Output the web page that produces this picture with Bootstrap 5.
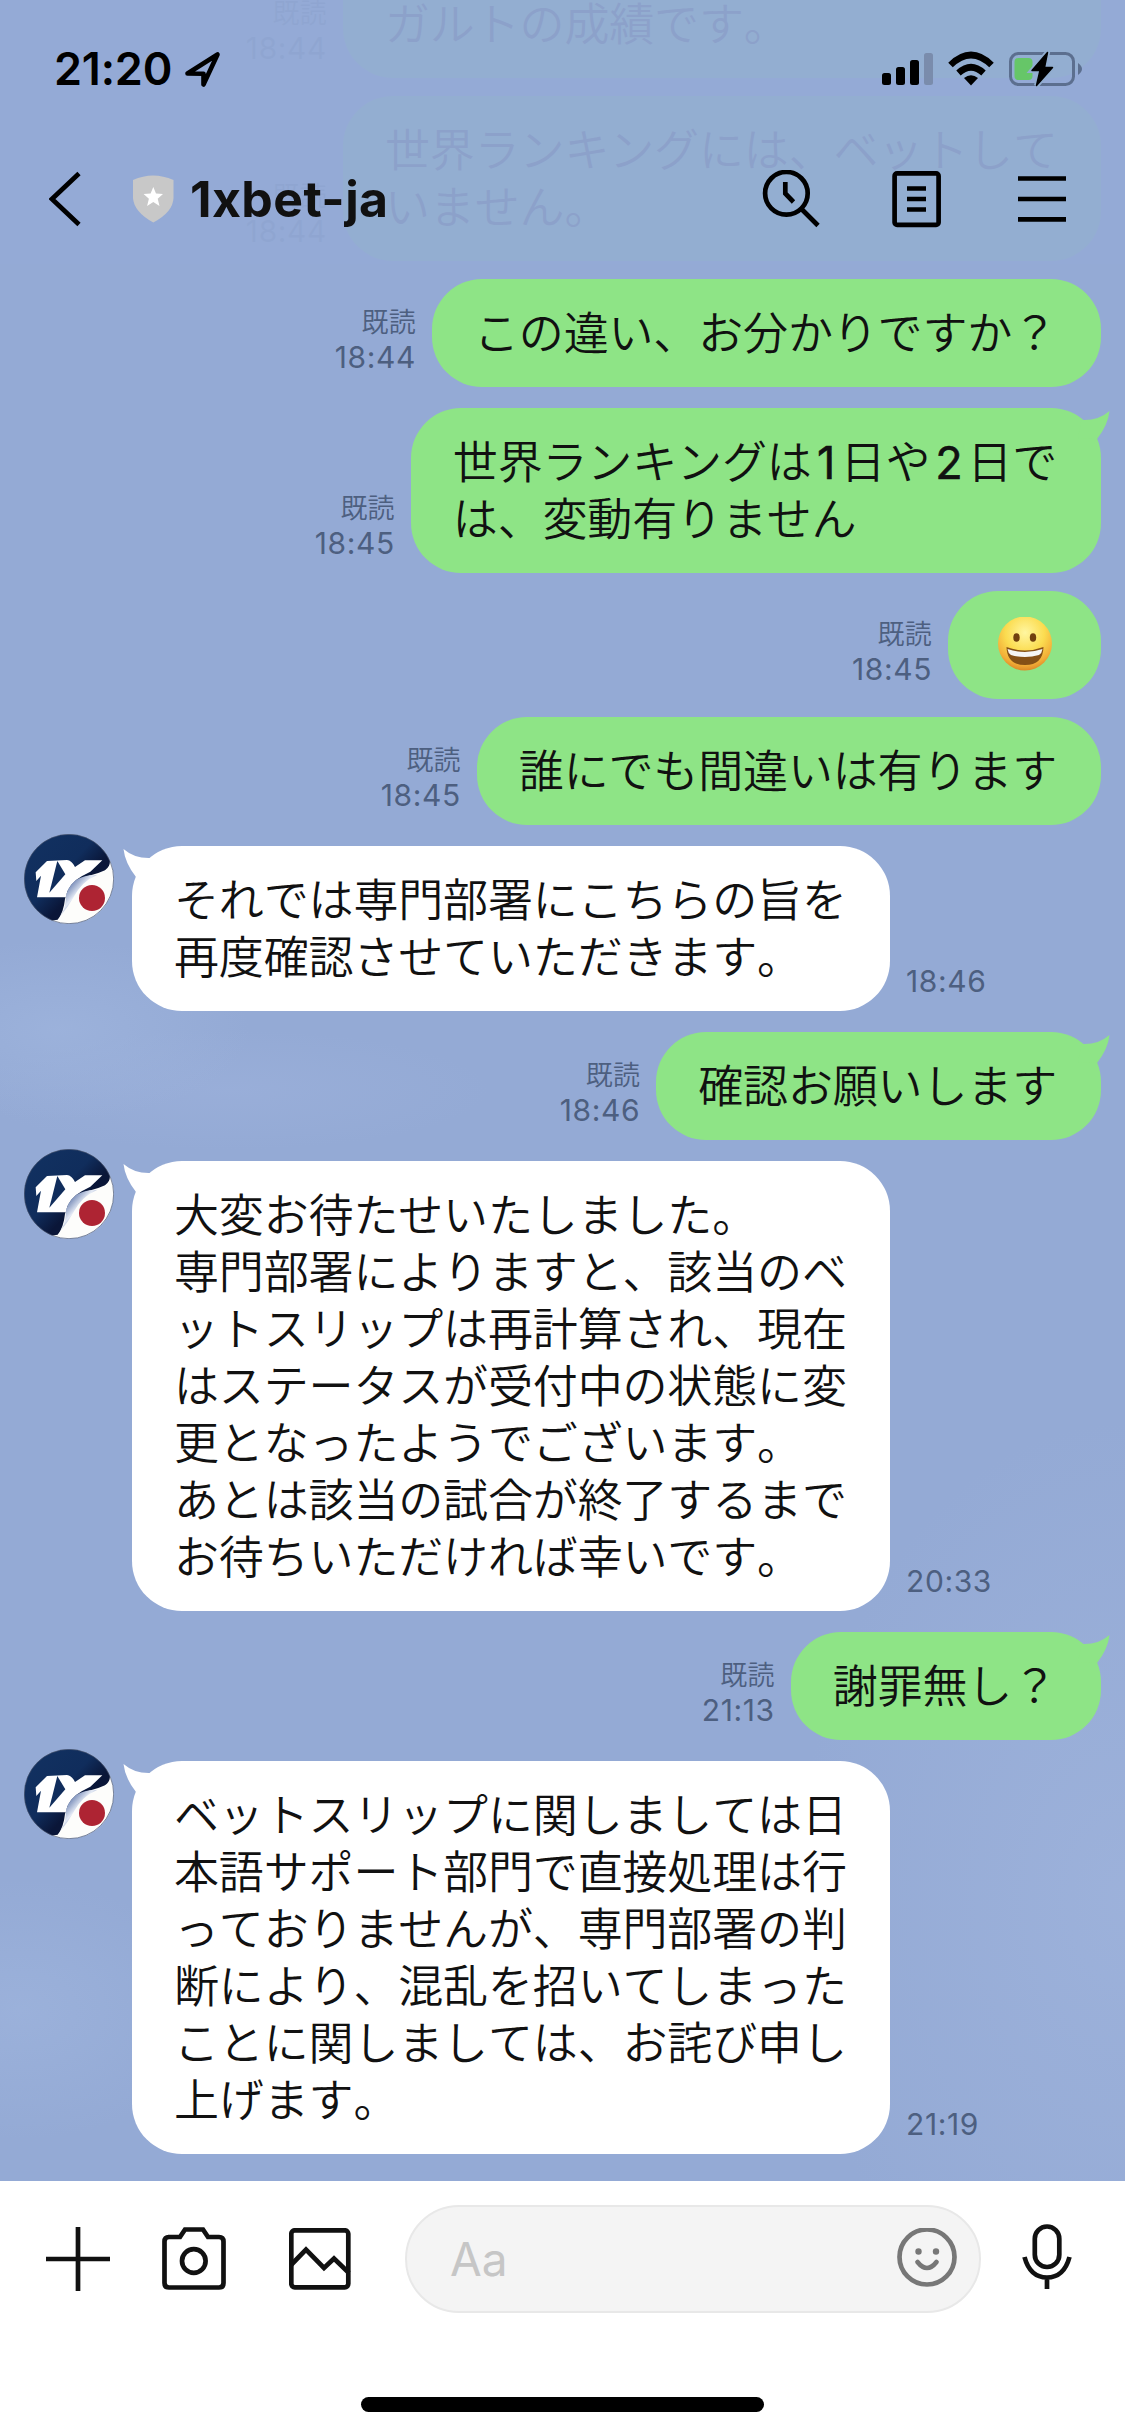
<!DOCTYPE html>
<html lang="ja">
<head>
<meta charset="utf-8">
<meta name="viewport" content="width=device-width, initial-scale=1">
<title>1xbet-ja</title>
<link href="https://cdn.jsdelivr.net/npm/bootstrap@5.3.0/dist/css/bootstrap.min.css" rel="stylesheet">
<style>
  body { width: 1125px; height: 2436px; overflow: hidden; font-family: Inter, "Noto Sans CJK JP", sans-serif; color: #111; }
  svg { display: block; flex: none; }
  .chat-area {
    flex: 1 1 0; min-height: 0; padding: 0 24px 27px;
    background:
      radial-gradient(ellipse 190px 90px at 60px 1030px, rgba(162,184,224,.55), rgba(162,184,224,0) 100%),
      radial-gradient(ellipse 260px 60px at 230px 1090px, rgba(160,180,222,.4), rgba(160,180,222,0) 100%),
      radial-gradient(ellipse 190px 130px at 20px 2010px, rgba(162,184,224,.5), rgba(162,184,224,0) 100%),
      radial-gradient(ellipse 330px 480px at 1125px 1900px, rgba(162,182,222,.6), rgba(162,182,222,0) 100%),
      #94aad5;
  }
  .msg { display: flex; flex: none; align-items: flex-end; margin-top: 21px; }
  .msg.tight { margin-top: 18px; }
  .msg.sent { justify-content: flex-end; }
  .bubble { position: relative; border-radius: 50px; padding: 25.5px 43px; font-family: "Noto Sans CJK JP", sans-serif; font-size: 45px; line-height: 57px; letter-spacing: -.15px; font-weight: 350; font-kerning: none; white-space: nowrap; }
  .bubble > span { display: block; margin: -3px 1px 3px -1px; }
  .sent .bubble { background: #8ee486; }
  .received .bubble { background: #fff; width: 758px; }
  .num { display: inline-block; font-family: Inter, sans-serif; font-weight: 400; text-align: center; line-height: 1; -webkit-text-stroke: .6px #111; }
  .tail { position: absolute; top: 0; width: 40px; height: 34px; }
  .sent .tail { right: -9px; fill: #8ee486; }
  .received .tail { left: -9px; fill: #fff; transform: scaleX(-1); }
  .meta { color: #4d5f80; text-align: right; font-size: 30px; line-height: 36px; letter-spacing: .6px; padding-bottom: 12px; }
  .sent .meta { margin-right: 16px; }
  .received .meta { margin-left: 16px; }
  .meta span { display: block; font-size: 27px; font-weight: 350; letter-spacing: .2px; margin-bottom: -2px; }
  .avatar { align-self: flex-start; margin: -12px 18px 0 0; }
  .past { width: 758px; }
  .past.cut { min-height: 165px; display: flex; align-items: flex-end; }
  .top-overlay { position: absolute; inset: 0 0 auto 0; height: 264px; background: rgba(148,170,214,.94); }
  .status-row { height: 138px; padding: 0 43px 0 54px; }
  .clock { font-size: 45px; font-weight: 600; line-height: 60px; color: #000; letter-spacing: -.2px; }
  .nav-row { height: 126px; padding: 0 59px 4px 49px; }
  .room-name { font-size: 50px; font-weight: 700; line-height: 60px; letter-spacing: .4px; }
  .ico { fill: none; stroke: #000; stroke-width: 4.7; }
  .input-bar { flex: none; height: 255px; padding-top: 24px; background: #fff; }
  .tool-row { height: 108px; padding: 0 52px 0 46px; }
  .tool-row .ico { stroke: #111; }
  .entry { width: 576px; height: 108px; border: 2px solid #e8e8e8; border-radius: 54px; background: #f4f4f4; color: #c6c6c6; font-size: 46px; padding: 0 22px 0 43px; }
  .home-bar { width: 403px; height: 15px; border-radius: 8px; background: #000; margin-top: 84px; }
</style>
</head>
<body class="d-flex flex-column position-relative">
<svg width="0" height="0" class="position-absolute">
  <defs>
    <linearGradient id="curl" x1="0" y1="0" x2="1" y2="1"><stop offset=".2" stop-color="#5870a6"/><stop offset=".45" stop-color="#e4eaf5"/><stop offset=".6" stop-color="#8191bb"/><stop offset=".8" stop-color="#fff"/></linearGradient>
    <linearGradient id="navy" x1="0" y1="0" x2="1" y2="1"><stop offset="0" stop-color="#123262"/><stop offset=".45" stop-color="#102d5c"/><stop offset=".62" stop-color="#0a1638"/></linearGradient>
    <clipPath id="disc"><circle cx="162" cy="162" r="134.5"/></clipPath>
    <radialGradient id="face" cx=".5" cy=".3" r=".72"><stop offset="0" stop-color="#fff6a0"/><stop offset=".5" stop-color="#fbdc50"/><stop offset=".82" stop-color="#f2ae38"/><stop offset="1" stop-color="#d98224"/></radialGradient>
    <symbol id="logo" viewBox="27 27 270 270">
      <g clip-path="url(#disc)">
        <rect x="27" y="27" width="270" height="270" fill="#fdfdfb"/>
        <path fill="url(#navy)" d="M20 20H262L283 98Q290 122 270 136Q250 146 222 152Q164 168 150 222Q146 262 128 284L20 300Z"/>
        <path fill="#fff" d="M62 142L96 108L156 105Q170 106 180 126L210 106H262L226 140L200 154Q160 176 152 217H66L78 152L64 168Z"/>
        <path fill="#102d5c" d="M127 108L151 148L103 203Z"/>
        <path fill="url(#curl)" d="M246 150Q212 148 184 164Q150 190 152 228Q150 254 134 276Q158 248 176 216Q202 168 246 150Z"/>
      </g>
      <circle cx="231" cy="219" r="39" fill="#ae2433"/>
      <circle cx="162" cy="162" r="134" fill="none" stroke="#44516f" stroke-width="2"/>
    </symbol>
    <symbol id="tail" viewBox="0 0 40 34"><path d="M11.500 12Q28 13 39.500 3Q38 17 27 31L8 30Z"/></symbol>
  </defs>
</svg>

<main class="chat-area d-flex flex-column justify-content-end overflow-hidden">
  <div class="msg sent"><div class="meta"><span>既読</span>18:44</div><div class="bubble past cut"><span>ガルトの成績です。</span></div></div>
  <div class="msg sent tight"><div class="meta"><span>既読</span>18:44</div><div class="bubble past"><span>世界ランキングには、ベットして<br>いません。</span></div></div>
  <div class="msg sent tight"><div class="meta"><span>既読</span>18:44</div><div class="bubble"><span>この違い、お分かりですか？</span></div></div>
  <div class="msg sent"><div class="meta"><span>既読</span>18:45</div><div class="bubble"><span>世界ランキングは<b class="num" style="width:29px">1</b>日や<b class="num" style="width:37px">2</b>日で<br>は、変動有りません</span><svg class="tail"><use href="#tail"/></svg></div></div>
  <div class="msg sent tight"><div class="meta"><span>既読</span>18:45</div><div class="bubble d-flex justify-content-center align-items-center" style="width:153px;height:108px">
    <svg width="54" height="56" viewBox="0 0 54 56"><circle cx="27" cy="26.500" r="27" fill="url(#face)"/><ellipse cx="18.500" cy="20.500" rx="3.200" ry="4.300" fill="#70400f"/><ellipse cx="35" cy="20.500" rx="3.200" ry="4.300" fill="#70400f"/><path d="M8.500 30Q27 37 45.500 30Q45 48 27 48T8.500 30Z" fill="#855016"/><path d="M9.500 32Q27 38 44.500 32Q44 36 41 38Q27 42 13 38Q10 36 9.500 32Z" fill="#f5f5f5"/></svg></div></div>
  <div class="msg sent tight"><div class="meta"><span>既読</span>18:45</div><div class="bubble"><span>誰にでも間違いは有ります</span></div></div>
  <div class="msg received"><svg class="avatar" width="90" height="90"><use href="#logo"/></svg><div class="bubble"><svg class="tail"><use href="#tail"/></svg><span>それでは専門部署にこちらの旨を<br>再度確認させていただきます。</span></div><div class="meta">18:46</div></div>
  <div class="msg sent"><div class="meta"><span>既読</span>18:46</div><div class="bubble"><span>確認お願いします</span><svg class="tail"><use href="#tail"/></svg></div></div>
  <div class="msg received"><svg class="avatar" width="90" height="90"><use href="#logo"/></svg><div class="bubble"><svg class="tail"><use href="#tail"/></svg><span>大変お待たせいたしました。<br>専門部署によりますと、該当のベ<br>ットスリップは再計算され、現在<br>はステータスが受付中の状態に変<br>更となったようでございます。<br>あとは該当の試合が終了するまで<br>お待ちいただければ幸いです。</span></div><div class="meta">20:33</div></div>
  <div class="msg sent"><div class="meta"><span>既読</span>21:13</div><div class="bubble"><span>謝罪無し？</span><svg class="tail"><use href="#tail"/></svg></div></div>
  <div class="msg received"><svg class="avatar" width="90" height="90"><use href="#logo"/></svg><div class="bubble"><svg class="tail"><use href="#tail"/></svg><span>ベットスリップに関しましては日<br>本語サポート部門で直接処理は行<br>っておりませんが、専門部署の判<br>断により、混乱を招いてしまった<br>ことに関しましては、お詫び申し<br>上げます。</span></div><div class="meta">21:19</div></div>
</main>

<header class="top-overlay">
  <div class="status-row d-flex align-items-center">
    <span class="clock">21:20</span>
    <svg width="37" height="37" viewBox="185 51 37 37" style="margin-left:12px"><path d="M188.500 73.500L218.500 54.500L204.500 84.500V73.700Z" fill="none" stroke="#000" stroke-width="4.600" stroke-linejoin="round"/></svg>
    <svg class="ms-auto" width="202" height="38" viewBox="880 50 202 38">
      <rect x="882" y="73" width="9" height="12" rx="2.500"/><rect x="896" y="67" width="9" height="18" rx="2.500"/><rect x="910" y="60" width="9" height="25" rx="2.500"/><rect x="924" y="53" width="9" height="32" rx="2.500" fill="#7a8cac"/>
      <path d="M950.500 65Q971 45 991.500 65" fill="none" stroke="#000" stroke-width="6.500"/><path d="M958.500 73Q971 61.500 983.500 73" fill="none" stroke="#000" stroke-width="6.500"/><path d="M964 78Q971 72.500 978 78L971 85.500Z"/>
      <rect x="1010.500" y="53.500" width="63" height="31" rx="8" fill="none" stroke="#5c6f8f" stroke-width="3"/><path d="M1078 63Q1082 66 1082 69T1078 75Z" fill="#5c6f8f"/>
      <rect x="1014.500" y="58" width="18" height="22" rx="4" fill="#66c668"/>
      <path d="M1047.500 52.500L1032 70.500H1040L1036.500 85.500L1052.500 67.500H1044.500Z" stroke="#91adcf" stroke-width="5"/><path d="M1047.500 52.500L1032 70.500H1040L1036.500 85.500L1052.500 67.500H1044.500Z" stroke="#000" stroke-width="1.500" stroke-linejoin="round"/>
    </svg>
  </div>
  <nav class="nav-row d-flex align-items-center">
    <svg class="ico" width="32" height="56" viewBox="49 172 32 56"><path d="M79 174.500L52 200L79 225.500"/></svg>
    <svg width="41" height="48" viewBox="133 174 41 48" style="margin-left:52px"><path fill="#c8c8c8" d="M133 179Q153 170 173.500 179V197Q173 211 153.300 221.500Q134 211 133 197Z"/><path fill="#fff" d="M153.300 186L156 192.500L163 193L157.700 197.700L159.500 205L153.300 201L147.100 205L148.900 197.700L143.600 193L150.600 192.500Z"/></svg>
    <span class="room-name ms-3">1xbet-ja</span>
    <svg class="ico ms-auto" width="58" height="58" viewBox="762 169 58 58"><circle cx="786.400" cy="192.300" r="21.300"/><path d="M785.300 181V192.500L793.500 201M802 208.500L818 224.500"/></svg>
    <svg class="ico" width="49" height="57" viewBox="892 171 49 57" style="margin-left:72px"><rect x="894.600" y="173.400" width="44" height="51.500" rx="2.500"/><path d="M907 188.500H926M907 199H926M907 209.500H926"/></svg>
    <svg class="ico" width="48" height="48" viewBox="1018 175 48 48" style="margin-left:77px"><path d="M1018 178.500H1066M1018 199H1066M1018 219.300H1066"/></svg>
  </nav>
</header>

<footer class="input-bar d-flex flex-column align-items-center">
  <div class="tool-row d-flex align-items-center w-100">
    <svg class="ico" width="64" height="64" viewBox="46 2227 64 64"><path d="M46 2259H110M78 2227V2291"/></svg>
    <svg class="ico" width="64" height="64" viewBox="162 2228 64 64" style="margin-left:52px"><path d="M168 2238H180L185 2230.500H203L208 2238H219Q223.500 2238 223.500 2242.500V2284Q223.500 2288.500 219 2288.500H169Q164.500 2288.500 164.500 2284V2242.500Q164.500 2238 169 2238Z"/><circle cx="193.800" cy="2262" r="11.800"/></svg>
    <svg class="ico" width="62" height="62" viewBox="289 2229 62 62" style="margin-left:63px"><rect x="291.300" y="2231.300" width="57" height="57" rx="3.500"/><path d="M291 2266L306 2250.500L324 2269L334 2259.500L349 2274"/></svg>
    <div class="entry d-flex align-items-center justify-content-between" style="margin-left:54px"><span>Aa</span>
      <svg width="60" height="62" viewBox="896.500 2228 60 62" fill="none" stroke="#777" stroke-width="4.700"><circle cx="926.500" cy="2257" r="27.500"/><path d="M917 2262Q926.500 2274 936 2262" stroke-linecap="round"/><circle cx="918" cy="2251.500" r="3.200" fill="#777" stroke="none"/><circle cx="935.500" cy="2251.500" r="3.200" fill="#777" stroke="none"/></svg></div>
    <svg class="ico ms-auto" width="52" height="70" viewBox="1021 2224 52 70"><rect x="1034.800" y="2226.500" width="24.500" height="40.500" rx="12.200"/><path d="M1024.500 2257Q1030 2277.500 1047 2277.500T1069.500 2257M1047 2277.500V2289"/></svg>
  </div>
  <div class="home-bar"></div>
</footer>
<script src="https://cdn.jsdelivr.net/npm/bootstrap@5.3.0/dist/js/bootstrap.bundle.min.js"></script>
</body>
</html>
